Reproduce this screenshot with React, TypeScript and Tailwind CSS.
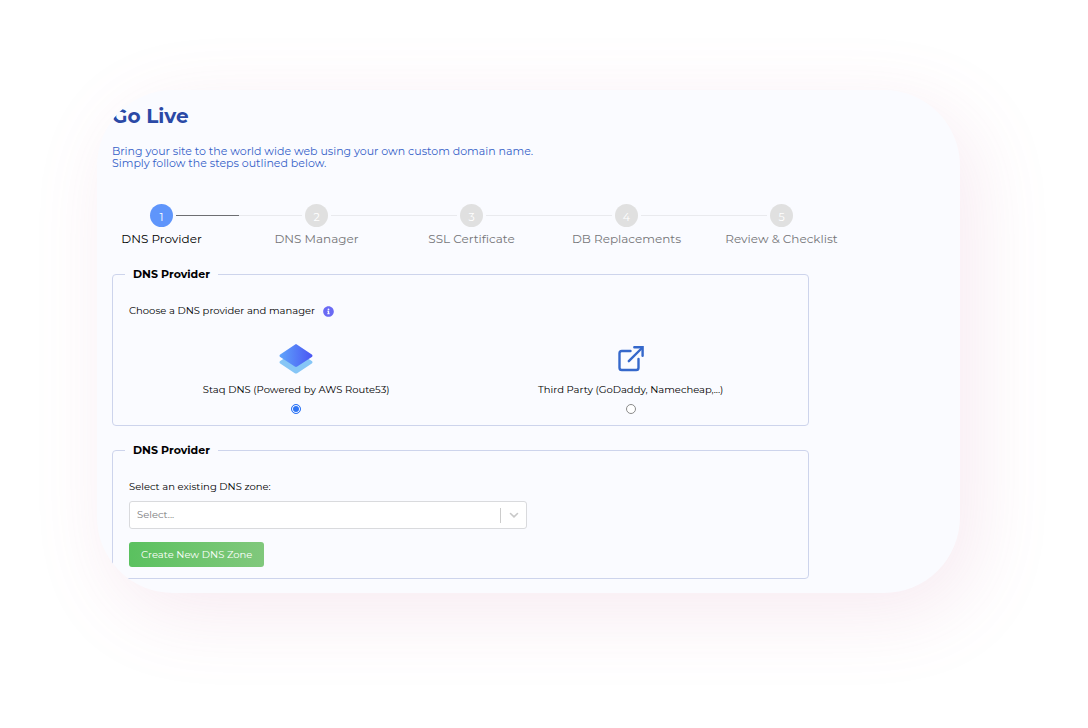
import * as React from "react";
import { FaInfoCircle } from "react-icons/fa";

const steps: string[] = [
  "DNS Provider",
  "DNS Manager",
  "SSL Certificate",
  "DB Replacements",
  "Review & Checklist",
];

function StaqIcon() {
  return (
    <svg width="34" height="30" viewBox="0 0 34 30" aria-hidden="true">
      <defs>
        <linearGradient id="staq" x1="0" y1="0" x2="1" y2="0">
          <stop offset="0" stopColor="#5fa4fb" />
          <stop offset="1" stopColor="#4a55f3" />
        </linearGradient>
      </defs>
      <path
        d="M15.8 7.6 1.2 17a1.4 1.4 0 0 0 0 2.4l14.6 9.8c.7.5 1.7.5 2.4 0l14.6-9.8a1.4 1.4 0 0 0 0-2.4L18.2 7.6z"
        fill="#86c6f6"
      />
      <path
        d="M15.8.7 1.2 10.4a1.5 1.5 0 0 0 0 2.5l14.6 9.7c.7.5 1.7.5 2.4 0l14.6-9.7a1.5 1.5 0 0 0 0-2.5L18.2.7c-.7-.5-1.7-.5-2.4 0z"
        fill="url(#staq)"
      />
    </svg>
  );
}

function ThirdPartyIcon() {
  return (
    <svg
      width="26"
      height="30"
      viewBox="0 0 26 30"
      fill="none"
      stroke="#3568cb"
      strokeWidth="2.4"
      strokeLinecap="round"
      aria-hidden="true"
    >
      <path d="M12.500 7H3.800A2.300 2.300 0 0 0 1.500 9.300v14.400A2.300 2.300 0 0 0 3.800 26h14.400a2.300 2.300 0 0 0 2.300-2.300V15" />
      <path d="M10.800 17.200 24 4" />
      <path d="M16.300 3.200h8.300v8.600" />
    </svg>
  );
}

const providers: any[] = [
  { id: "staq", label: "Staq DNS (Powered by AWS Route53)", icon: <StaqIcon /> },
  { id: "third-party", label: "Third Party (GoDaddy, Namecheap,...)", icon: <ThirdPartyIcon /> },
];

function Stepper() {
  return (
    <ol className="-ml-7 -mr-[50px] mt-[35px] grid grid-cols-5">
      {steps.map((step: string, index: number) => (
        <li key={step} className="flex flex-col items-center">
          <div className="flex w-full items-center gap-[3px]">
            <span className={index === 0 ? "flex-1" : "h-px flex-1 bg-[#e9eaee]"} />
            <span
              className={
                index === 0
                  ? "h-[23px] w-[23px] rounded-full bg-[#5f95fb] pt-1 text-center text-[11px] leading-[18px] text-white"
                  : "h-[23px] w-[23px] rounded-full bg-[#e0e0e0] pt-1 text-center text-[11px] leading-[18px] text-white"
              }
            >
              {index + 1}
            </span>
            <span
              className={
                index === 0
                  ? "h-px flex-1 bg-[#6d6e72]"
                  : index === steps.length - 1
                    ? "flex-1"
                    : "h-px flex-1 bg-[#e9eaee]"
              }
            />
          </div>
          <span
            className={
              index === 0
                ? "mt-1 text-[12px] leading-4 text-black"
                : "mt-1 text-[12px] leading-4 text-[#757578]"
            }
          >
            {step}
          </span>
        </li>
      ))}
    </ol>
  );
}

export default function App() {
  const [provider, setProvider] = React.useState("staq");

  return (
    <div className="min-h-screen bg-white pt-[90px] pr-32 pb-[136px] pl-[97px] font-['Montserrat','Inter',sans-serif]">
      <main className="overflow-hidden rounded-[76px] bg-[#fafbff] pt-[13px] pr-[151px] pb-[14px] pl-[15px] text-[10px] leading-4 text-black shadow-[14px_20px_80px_rgba(195,95,145,0.13)]">
        <h1 className="text-[20px] leading-[26px] font-bold text-[#2b49a6]">Go Live</h1>
        <p className="mt-4 text-[11px] leading-3 text-[#3561c8]">
          Bring your site to the world wide web using your own custom domain name.
          <br />
          Simply follow the steps outlined below.
        </p>

        <Stepper />

        <fieldset className="mt-[19px] rounded-[4px] border border-[#cdd4ec] pr-[10px] pb-[11px] pl-4">
          <legend className="-ml-1 px-2 text-[11px] leading-4 font-bold text-black">DNS Provider</legend>
          <div className="flex items-center gap-2 pt-[21px]">
            <span>Choose a DNS provider and manager</span>
            <FaInfoCircle className="text-[11px] text-[#6a6af4]" />
          </div>
          <div className="mt-[25px] grid grid-cols-2">
            {providers.map((item: any) => (
              <label key={item.id} className="flex flex-col items-center">
                {item.icon}
                <span className="mt-2">{item.label}</span>
                <input
                  type="radio"
                  name="provider"
                  value={item.id}
                  checked={provider === item.id}
                  onChange={() => setProvider(item.id)}
                  className="mt-[6px] h-[10px] w-[10px] appearance-none rounded-full border border-[#8a8a8a] bg-white checked:border-[#2f75f5] checked:bg-[#2f75f5] checked:shadow-[inset_0_0_0_1px_#fff]"
                />
              </label>
            ))}
          </div>
        </fieldset>

        <fieldset className="mt-4 rounded-[4px] border border-[#cdd4ec] pr-[10px] pb-[11px] pl-4">
          <legend className="-ml-1 px-2 text-[11px] leading-4 font-bold text-black">DNS Provider</legend>
          <label htmlFor="zone" className="block pt-[21px]">
            Select an existing DNS zone:
          </label>
          <div className="relative mt-[6px] w-full max-w-[398px]">
            <select
              id="zone"
              className="block h-7 w-full appearance-none rounded-[3px] border border-[#d9dadd] bg-white pr-8 pl-[7px] text-[10px] text-[#7b7b7d]"
            >
              <option>Select...</option>
            </select>
            <div className="pointer-events-none absolute inset-y-0 right-0 flex items-center">
              <span className="h-[15px] w-px bg-[#cccccc]" />
              <svg className="mx-2" width="10" height="10" viewBox="0 0 10 10" fill="none" stroke="#c8c8c8" strokeWidth="1.6" strokeLinecap="round">
                <path d="m1.500 3.500 3.500 3.300 3.500-3.300" />
              </svg>
            </div>
          </div>
          <button
            type="button"
            className="mt-[13px] block h-[25px] rounded-[3px] bg-linear-to-r from-[#5ac15f] to-[#80c87c] px-3 text-[10px] text-white"
          >
            Create New DNS Zone
          </button>
        </fieldset>
      </main>
    </div>
  );
}
